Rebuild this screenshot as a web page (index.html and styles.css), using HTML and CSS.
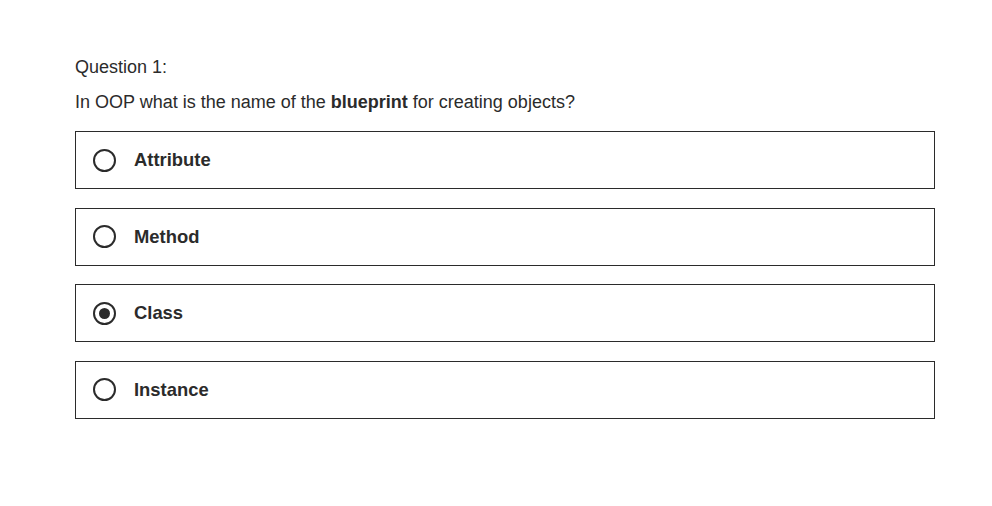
FILE: index.html
```html
<!DOCTYPE html>
<html>
<head>
<meta charset="utf-8">
<link rel="stylesheet" href="styles.css">
</head>
<body>
<div class="quiz">
  <p class="label">Question 1:</p>
  <p class="prompt">In OOP what is the name of the <strong>blueprint</strong> for creating objects?</p>
  <ul class="options">
    <li class="option"><span class="radio"></span><span class="text">Attribute</span></li>
    <li class="option"><span class="radio"></span><span class="text">Method</span></li>
    <li class="option selected"><span class="radio"></span><span class="text">Class</span></li>
    <li class="option"><span class="radio"></span><span class="text">Instance</span></li>
  </ul>
</div>
</body>
</html>
```
FILE: styles.css
```css
html, body { margin: 0; padding: 0; background: #fff; }
body { font-family: "Liberation Sans", Arial, sans-serif; color: #2b2b2b; }
.quiz { padding: 55px 0 0 75px; width: 860px; }
.label { margin: 0; font-size: 18px; line-height: 24px; }
.prompt { margin: 11px 0 0; font-size: 18px; line-height: 24px; }
.prompt strong { font-weight: 700; }
.options { list-style: none; margin: 17px 0 0; padding: 0; display: flex; flex-direction: column; gap: 18.67px; }
.option { box-sizing: border-box; height: 58px; border: 1px solid #2b2b2b; display: flex; align-items: center; padding-left: 17px; }
.radio { box-sizing: border-box; width: 23px; height: 23px; border: 2px solid #2b2b2b; border-radius: 50%; display: flex; align-items: center; justify-content: center; }
.selected .radio::after { content: ""; width: 11px; height: 11px; border-radius: 50%; background: #2b2b2b; }
.text { margin-left: 18px; font-size: 18.4px; font-weight: 700; }
```
